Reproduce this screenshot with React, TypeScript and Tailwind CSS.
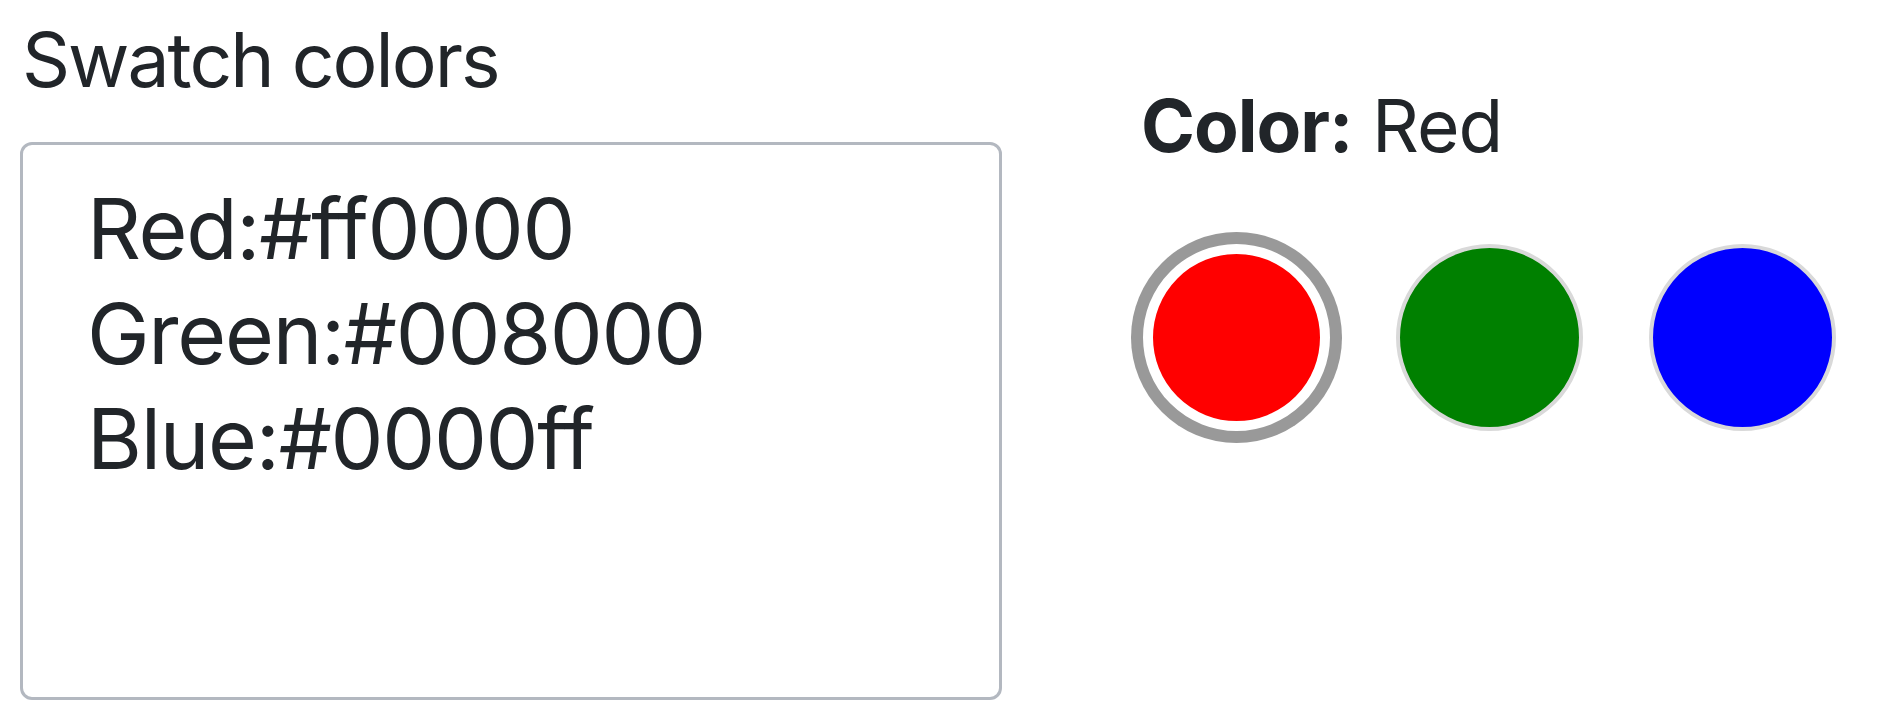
import { useState } from "react";

type Swatch = { name: string; hex: string };

const INITIAL = "Red:#ff0000\nGreen:#008000\nBlue:#0000ff";

// Parse "Name:#hex" lines into swatches
function parseSwatches(text: string): Swatch[] {
  return text
    .split("\n")
    .map((line) => line.split(":"))
    .filter((parts) => parts.length === 2 && parts[1].trim().startsWith("#"))
    .map(([name, hex]) => ({ name: name.trim(), hex: hex.trim() }));
}

export default function App() {
  const [value, setValue] = useState(INITIAL);
  const [selected, setSelected] = useState("Red");
  const swatches = parseSwatches(value);

  return (
    <div className="min-h-screen bg-white text-[#212529] font-['Inter','Liberation_Sans',sans-serif] flex">
      {/* Editor column */}
      <div className="w-[982px] ml-[20px] pt-[14px] flex flex-col">
        <label htmlFor="swatches" className="text-[75px] leading-[91px] tracking-[-2px] pl-[2px]">
          Swatch colors
        </label>
        <textarea
          id="swatches"
          value={value}
          onChange={(e) => setValue(e.target.value)}
          className="mt-[37px] h-[558px] w-full resize-none rounded-[12px] border-[3px] border-[#b3b8c0] bg-white pl-[64px] pt-[31px] text-[84px] leading-[105px] tracking-[-1.3px] text-[#212529] outline-none"
        />
      </div>

      {/* Swatch picker column */}
      <div className="ml-[139px] pt-[82px] flex flex-col">
        <p className="text-[73px] leading-[88px] tracking-[-1px]">
          <span className="font-bold">Color:</span> {selected}
        </p>
        <div className="mt-[74px] flex gap-[66px] pl-[2px]">
          {swatches.map((s) => (
            <button
              key={s.name}
              type="button"
              title={s.name}
              onClick={() => setSelected(s.name)}
              style={{ backgroundColor: s.hex }}
              className={
                s.name === selected
                  ? "h-[187px] w-[187px] rounded-full border-[10px] border-white shadow-[0_0_0_12px_#999999]"
                  : "h-[187px] w-[187px] rounded-full border-[4px] border-[#d9d9d9]"
              }
            />
          ))}
        </div>
      </div>
    </div>
  );
}
